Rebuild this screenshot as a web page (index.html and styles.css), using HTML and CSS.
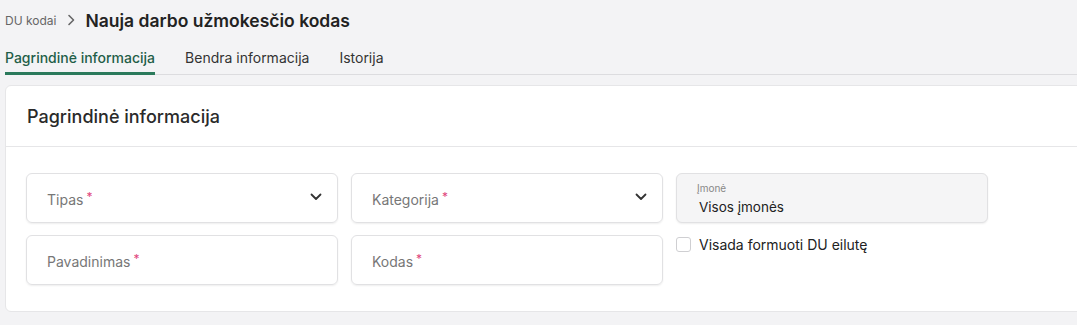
FILE: index.html
```html
<!DOCTYPE html>
<html lang="lt">
<head>
<meta charset="utf-8">
<link rel="stylesheet" href="styles.css">
</head>
<body>
<div class="page">
  <div class="breadcrumb">
    <span class="crumb">DU kodai</span>
    <svg class="crumb-sep" width="10" height="12" viewBox="0 0 10 12"><path d="M3 1.5 L7.5 6 L3 10.5" fill="none" stroke="#666" stroke-width="1.6" stroke-linecap="round" stroke-linejoin="round"/></svg>
    <h1 class="title">Nauja darbo užmokesčio kodas</h1>
  </div>
  <nav class="tabs">
    <a class="tab active">Pagrindinė informacija</a>
    <a class="tab">Bendra informacija</a>
    <a class="tab">Istorija</a>
  </nav>
  <section class="card">
    <div class="card-head">Pagrindinė informacija</div>
    <div class="card-body">
      <div class="field">
        <span class="label">Tipas<span class="req">*</span></span>
        <svg class="chev" width="12" height="8" viewBox="0 0 12 8"><path d="M1.5 1.5 L6 6 L10.5 1.5" fill="none" stroke="#333" stroke-width="1.8" stroke-linecap="round" stroke-linejoin="round"/></svg>
      </div>
      <div class="field">
        <span class="label">Kategorija<span class="req">*</span></span>
        <svg class="chev" width="12" height="8" viewBox="0 0 12 8"><path d="M1.5 1.5 L6 6 L10.5 1.5" fill="none" stroke="#333" stroke-width="1.8" stroke-linecap="round" stroke-linejoin="round"/></svg>
      </div>
      <div class="field filled">
        <span class="small-label">Įmonė</span>
        <span class="value">Visos įmonės</span>
      </div>
      <div class="field">
        <span class="label">Pavadinimas<span class="req">*</span></span>
      </div>
      <div class="field">
        <span class="label">Kodas<span class="req">*</span></span>
      </div>
      <label class="check">
        <span class="box"></span>
        <span class="check-text">Visada formuoti DU eilutę</span>
      </label>
    </div>
  </section>
</div>
</body>
</html>
```
FILE: styles.css
```css
* { box-sizing: border-box; }
html, body { margin: 0; }
body {
  background: #f3f3f5;
  font-family: "Inter", "Lato", sans-serif;
  color: #222;
  overflow: hidden;
  width: 1077px;
  height: 325px;
}
.page { padding: 0 0 0 5px; }
.breadcrumb {
  display: flex;
  align-items: center;
  height: 40px;
}
.crumb { font-size: 12px; color: #666; }
.crumb-sep { margin: 0 9px 0 10px; }
.title { margin: 0; font-size: 17.5px; font-weight: 600; color: #222; }
.tabs {
  display: flex;
  gap: 30px;
  border-bottom: 1px solid #dcdcdf;
  height: 35px;
  align-items: stretch;
}
.tab {
  font-size: 14px;
  color: #333;
  padding-top: 9px;
  border-bottom: 3px solid transparent;
  margin-bottom: -1px;
}
.tab.active { color: #1f5e48; border-bottom-color: #2b7a5c; font-weight: 500; }
.card {
  margin-top: 10px;
  margin-right: -20px;
  background: #fff;
  border: 1px solid #e6e6e8;
  border-radius: 6px;
}
.card-head {
  height: 61px;
  display: flex;
  align-items: center;
  padding-left: 21px;
  font-size: 18px;
  font-weight: 500;
  color: #2a2a2a;
  border-bottom: 1px solid #e6e6e8;
}
.card-body {
  display: grid;
  grid-template-columns: 312px 312px 312px;
  grid-auto-rows: 50px;
  column-gap: 13px;
  row-gap: 12px;
  padding: 26px 20px 26px;
}
.field {
  border: 1px solid #e1e1e3;
  border-radius: 6px;
  box-shadow: 0 1px 2px rgba(0,0,0,0.07);
  display: flex;
  align-items: center;
  justify-content: space-between;
  padding: 0 15px 0 20px;
}
.label { font-size: 14px; color: #777; }
.req { color: #e0457b; font-size: 12px; margin-left: 3px; vertical-align: 4px; }
.chev { margin-top: -2px; }
.field.filled {
  background: #f5f5f6;
  flex-direction: column;
  align-items: flex-start;
  justify-content: flex-start;
  padding: 8px 20px 0 20px;
}
.small-label { font-size: 10px; color: #888; line-height: 12px; }
.value { font-size: 13.5px; color: #222; line-height: 20px; margin-top: 3px; padding-left: 2px; }
.check {
  display: flex;
  align-items: flex-start;
  gap: 8px;
  padding-top: 2px;
}
.box {
  width: 15px;
  height: 15px;
  border: 1px solid #cfcfd2;
  border-radius: 3px;
  background: #fff;
}
.check-text { font-size: 14px; color: #222; line-height: 18px; margin-top: -1px; }
```
